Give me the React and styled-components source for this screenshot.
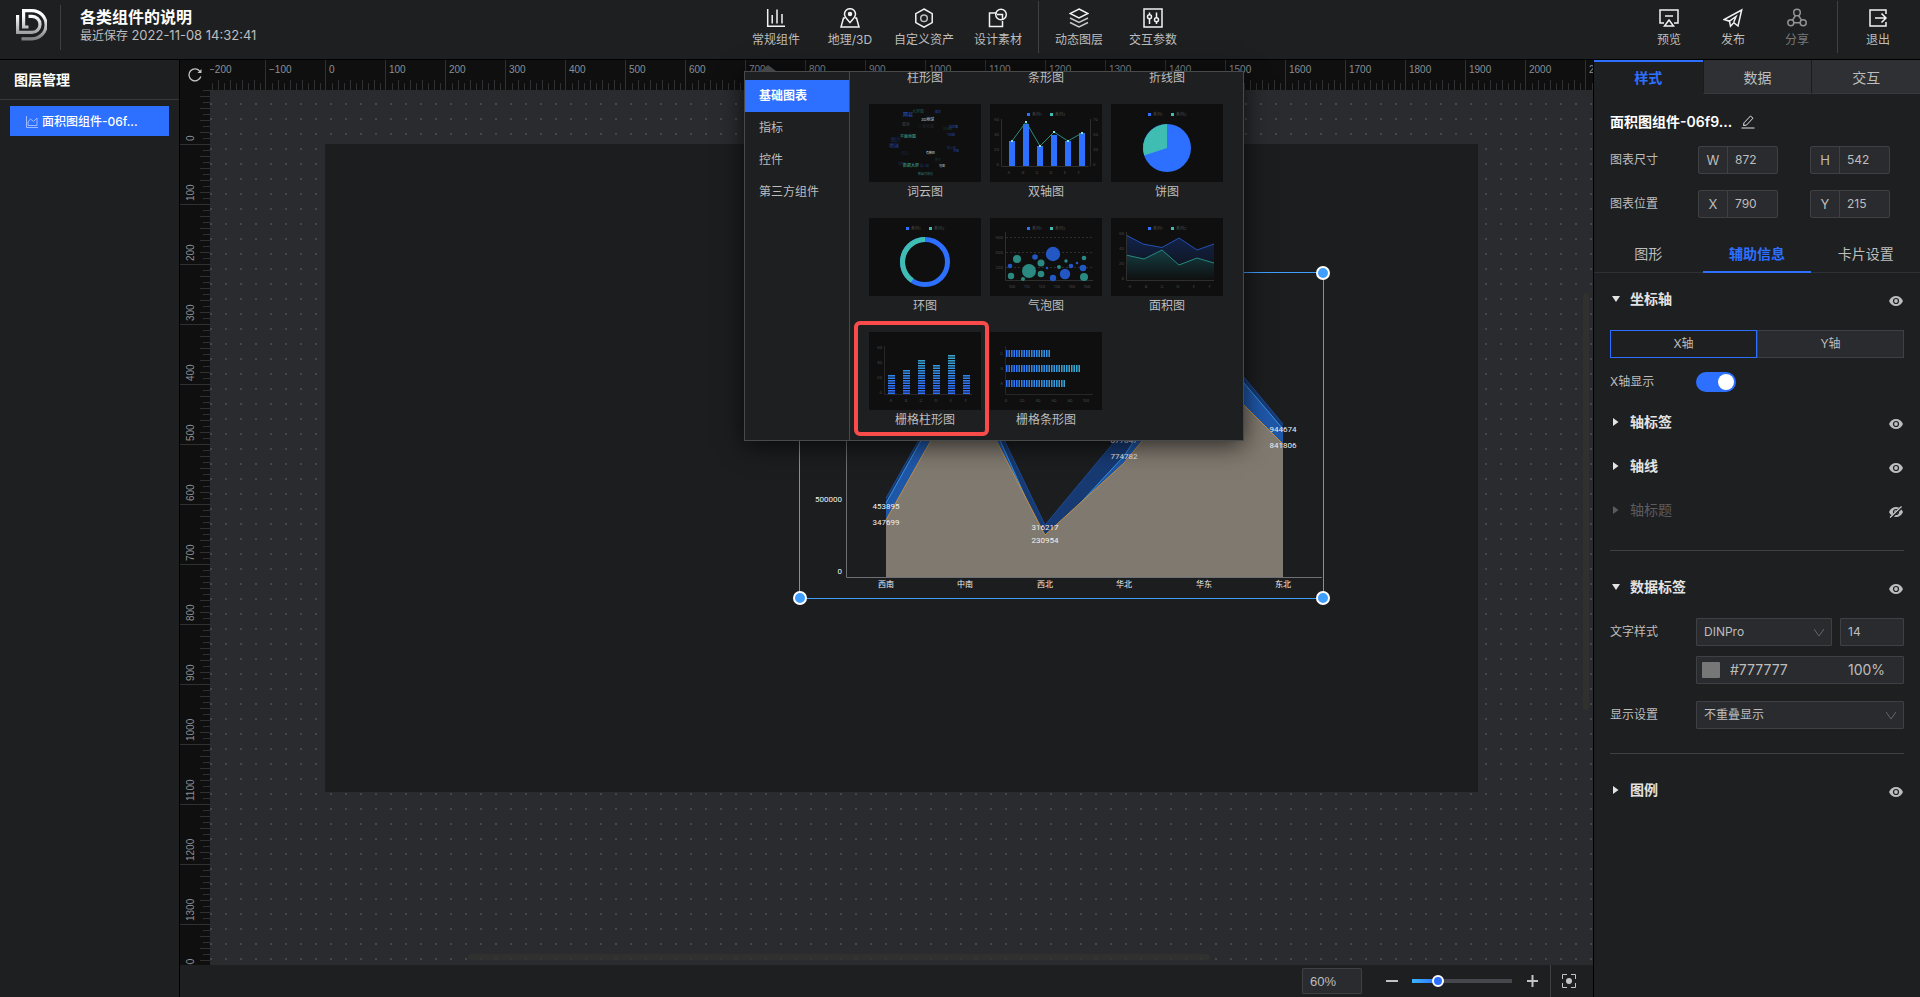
import React, { useState } from 'react';
import styled, { createGlobalStyle, css } from 'styled-components';

const colors = {
    panel: '#1e1f21',
    dark: '#0f0f0f',
    canvas: '#2a2b2f',
    board: '#1c1d1f',
    line: '#3f4043',
    text: '#bdbdbd',
    white: '#ffffff',
    blue: '#2d70ff',
    teal: '#3fbdb2',
    select: '#409eff',
    red: '#f94c4a',
};

const GlobalStyle = createGlobalStyle`
    * { box-sizing: border-box; }
    body {
        margin: 0;
        background: ${colors.panel};
        color: ${colors.text};
        font-family: Inter, "Noto Sans CJK SC", sans-serif;
        font-size: 12px;
        line-height: 20px;
        overflow: hidden;
    }
    button, input, select {
        font: inherit;
        color: inherit;
        border: 0;
        padding: 0;
        margin: 0;
        background: none;
        outline: none;
        border-radius: 0;
    }
    svg { display: block; flex: none; }
    h1, h2, p { margin: 0; }
`;

/* ---------- page ---------- */

const Page = styled.div`
    height: 100vh;
    display: flex;
    flex-direction: column;
`;

const Body = styled.div`
    flex: 1;
    min-height: 0;
    display: flex;
`;

/* ---------- header ---------- */

const Header = styled.header`
    height: 60px;
    padding: 0 5px 0 16px;
    display: flex;
    border-bottom: 1px solid #000;
    background: ${colors.panel};
`;

const Brand = styled.div`
    flex: 1;
    display: flex;
    align-items: flex-start;
    padding-right: 3px;
`;

const BrandLogo = styled.svg`
    margin: 9px 13px 0 0;
`;

const BrandText = styled.div`
    margin-left: 19px;
    padding-top: 7px;
`;

const ProjectName = styled.h1`
    font-size: 16px;
    line-height: 20px;
    font-weight: 600;
    color: ${colors.white};
`;

const Saved = styled.p`
    line-height: 16px;
    time {
        font-size: 13px;
    }
`;

const Split = styled.span`
    flex: none;
    width: 1px;
    height: ${({ $tall }) => ($tall ? 52 : 45)}px;
    margin: ${({ $margin }) => $margin || '1px 3px 0'};
    background: ${colors.line};
`;

const Nav = styled.nav`
    position: relative;
    display: flex;
`;

const Actions = styled.div`
    flex: 1;
    display: flex;
    justify-content: flex-end;
    padding-right: 5px;
`;

const ToolButton = styled.button`
    width: ${({ $width }) => $width || 74}px;
    height: 59px;
    padding: 8px 0 9px;
    display: flex;
    flex-direction: column;
    align-items: center;
    justify-content: space-between;
    opacity: ${({ disabled }) => (disabled ? 0.55 : 1)};
    white-space: nowrap;
    cursor: pointer;
`;

/* ---------- layer panel ---------- */

const LayerPanel = styled.aside`
    flex: none;
    width: 180px;
    border-right: 1px solid #000;
    background: ${colors.panel};
`;

const LayerTitle = styled.h2`
    height: 40px;
    padding-left: 14px;
    font-size: 14px;
    line-height: 40px;
    font-weight: 600;
    color: ${colors.white};
    border-bottom: 1px solid #36373a;
`;

const LayerItem = styled.button`
    width: calc(100% - 20px);
    height: 30px;
    margin: 6px 10px;
    padding: 2px 0 0 16px;
    display: flex;
    align-items: center;
    gap: 4px;
    background: ${colors.blue};
    color: ${colors.white};
    font-weight: 500;
`;

/* ---------- work area ---------- */

const Work = styled.main`
    flex: 1;
    min-width: 0;
    display: grid;
    grid-template-columns: 30px minmax(0, 1fr);
    grid-template-rows: 30px minmax(0, 1fr) 32px;
    background: ${colors.dark};
`;

const Reset = styled.button`
    display: flex;
    align-items: center;
    justify-content: center;
`;

const Ruler = styled.svg`
    width: 100%;
    height: 100%;
    overflow: hidden;
    font-family: "Liberation Sans", sans-serif;
    font-size: 10px;
    fill: #8a8f96;
`;

const Canvas = styled.div`
    position: relative;
    overflow: hidden;
    background: radial-gradient(circle at 1px 14px, #45474b 1px, transparent 1px) 0 0 / 15px 15px ${colors.canvas};
`;

const Board = styled.div`
    position: absolute;
    left: 115px;
    top: 54px;
    width: 1153px;
    height: 648px;
    background: ${colors.board};
`;

const Selection = styled.div`
    position: absolute;
    left: 474px;
    top: 128px;
    width: 525px;
    height: 327px;
    padding: 1px;
    border: 1px solid ${colors.select};
`;

const ChartSvg = styled.svg`
    overflow: visible;
    font-family: Roboto, "Noto Sans CJK SC", sans-serif;
    font-size: 8px;
    fill: #f0f0f0;
`;

const Handle = styled.span`
    position: absolute;
    width: 14px;
    height: 14px;
    border: 2px solid ${colors.white};
    border-radius: 50%;
    background: ${colors.select};
    ${({ $x }) => $x}: -7px;
    ${({ $y }) => $y}: -7px;
`;

const ScrollThumb = styled.span`
    position: absolute;
    border-radius: 3px;
    background: rgba(50, 50, 48, 0.8);
    ${({ $vertical }) => ($vertical
        ? css`right: 4px; top: 203px; width: 6px; height: 417px;`
        : css`left: 258px; bottom: 5px; width: 742px; height: 6px;`)}
`;

const Footer = styled.footer`
    grid-column: 1 / -1;
    display: flex;
    align-items: center;
    justify-content: flex-end;
    padding-right: 17px;
    background: ${colors.panel};
`;

const ZoomInput = styled.input`
    width: 60px;
    height: 26px;
    padding-left: 7px;
    border: 1px solid ${colors.line};
    border-radius: 1px;
    background: ${colors.canvas};
    font-family: "Liberation Sans", sans-serif;
    font-size: 13px;
    margin-right: 24px;
`;

const ZoomSlider = styled.input`
    appearance: none;
    width: 100px;
    height: 12px;
    margin: 0 15px 0 14px;
    background: linear-gradient(90deg, #3db4ff, ${colors.blue} 26px, #46474c 26px) center / 100% 4px no-repeat;
    &::-webkit-slider-thumb {
        appearance: none;
        width: 12px;
        height: 12px;
        border: 2px solid ${colors.white};
        border-radius: 50%;
        background: ${colors.blue};
    }
`;

const FitButton = styled.button`
    height: 32px;
    margin-left: 12px;
    padding-left: 11px;
    border-left: 1px solid ${colors.line};
`;

/* ---------- component popup ---------- */

const Popup = styled.div`
    position: absolute;
    z-index: 10;
    left: 5px;
    top: 71px;
    width: 500px;
    height: 370px;
    display: flex;
    border: 1px solid #48494b;
    background: ${colors.panel};
    box-shadow: 0 4px 24px rgba(0, 0, 0, 0.7);
    &::before {
        content: '';
        position: absolute;
        left: 15px;
        top: -7px;
        border: 8px solid transparent;
        border-top: 0;
        border-bottom: 6px solid #454648;
    }
`;

const Kinds = styled.div`
    flex: none;
    width: 105px;
    padding-top: 8px;
    border-right: 1px solid #48494b;
`;

const Kind = styled.button`
    display: block;
    width: 100%;
    height: 32px;
    padding-left: 14px;
    text-align: left;
    ${({ $active }) => $active && css`
        background: ${colors.blue};
        color: ${colors.white};
        font-weight: 600;
    `}
`;

const Thumbs = styled.div`
    flex: 1;
    display: grid;
    grid-template-columns: repeat(3, 112px);
    align-content: end;
    gap: 16px 9px;
    padding: 0 0 10px 19px;
    overflow: hidden;
`;

const ThumbButton = styled.button`
    position: relative;
    display: block;
    text-align: center;
    line-height: 20px;
    ${({ $marked }) => $marked && css`
        &::after {
            content: '';
            position: absolute;
            inset: -11px -8px -6px -15px;
            border: 4px solid ${colors.red};
            border-radius: 6px;
        }
    `}
`;

const ThumbSvg = styled.svg`
    background: ${colors.dark};
    font-family: Inter, "Noto Sans CJK SC", sans-serif;
    font-size: 4px;
    fill: #4a4a4a;
`;

/* ---------- property panel ---------- */

const Side = styled.aside`
    flex: none;
    width: 327px;
    border-left: 1px solid #000;
    background: ${colors.panel};
`;

const MainTabs = styled.div`
    display: grid;
    grid-template-columns: repeat(3, 1fr);
`;

const MainTab = styled.button`
    height: 34px;
    padding-top: 2px;
    font-size: 14px;
    background: #2f3033;
    border-left: 1px solid #1a1b1d;
    border-bottom: 1px solid #38393c;
    ${({ $active }) => $active && css`
        border: 0;
        padding: 0;
        border-top: 2px solid ${colors.blue};
        background: none;
        color: ${colors.blue};
        font-weight: 600;
    `}
`;

const SubTabs = styled(MainTabs)`
    margin-top: 17px;
    border-bottom: 1px solid #2f3033;
`;

const SubTab = styled.button`
    height: 38px;
    padding-top: 2px;
    font-size: 14px;
    margin-bottom: -1px;
    border-bottom: 2px solid transparent;
    ${({ $active }) => $active && css`
        border-color: ${colors.blue};
        color: ${colors.blue};
        font-weight: 600;
    `}
`;

const Block = styled.div`
    padding: 0 16px;
`;

const NameRow = styled.div`
    display: flex;
    align-items: center;
    gap: 9px;
    padding: 18px 0 14px;
    font-size: 14px;
    font-weight: 600;
    color: ${colors.white};
`;

const Row = styled.div`
    display: flex;
    align-items: center;
    min-height: 28px;
    margin-top: ${({ $top }) => $top || 0}px;
`;

const RowLabel = styled.label`
    flex: none;
    width: ${({ $wide }) => ($wide ? 88 : 86)}px;
`;

const Pair = styled.div`
    flex: 1;
    display: flex;
    gap: 32px;
`;

const Prefixed = styled.label`
    width: 80px;
    height: 28px;
    display: flex;
    border: 1px solid ${colors.line};
    border-radius: 2px;
    background: ${colors.canvas};
`;

const Prefix = styled.span`
    flex: none;
    width: 29px;
    line-height: 26px;
    font-size: 13px;
    text-align: center;
    border-right: 1px solid ${colors.line};
`;

const PlainInput = styled.input`
    flex: 1;
    width: 100%;
    min-width: 0;
    padding-left: 7px;
`;

const SectionHead = styled.div`
    height: 44px;
    margin-top: ${({ $top }) => $top || 0}px;
    display: flex;
    align-items: center;
    justify-content: space-between;
`;

const Fold = styled.button`
    display: flex;
    align-items: center;
    gap: 10px;
    padding-left: 2px;
    font-size: 14px;
    font-weight: ${({ $off }) => ($off ? 400 : 600)};
    color: ${({ $off }) => ($off ? '#5c5c5e' : '#e3e3e3')};
`;

const EyeButton = styled.button`
    padding: 4px 1px 0 0;
`;

const Segments = styled.div`
    display: grid;
    grid-template-columns: 1fr 1fr;
    margin-top: 9px;
`;

const Segment = styled.button`
    height: 28px;
    border: 1px solid ${({ $active }) => ($active ? colors.blue : colors.line)};
    background: ${({ $active }) => ($active ? 'none' : colors.canvas)};
`;

const Switch = styled.input`
    appearance: none;
    width: 40px;
    height: 20px;
    padding: 2px;
    border-radius: 10px;
    background: ${colors.blue};
    display: flex;
    justify-content: flex-end;
    &::before {
        content: '';
        width: 16px;
        height: 16px;
        border-radius: 50%;
        background: ${colors.white};
    }
`;

const Field = styled.span`
    position: relative;
    flex: ${({ $width }) => ($width ? `0 0 ${$width}px` : '1 1 0')};
    min-width: 0;
    height: 28px;
    display: flex;
    align-items: center;
    border: 1px solid ${colors.line};
    border-radius: 1px;
    background: ${colors.canvas};
    & + & {
        margin-left: 8px;
    }
`;

const FieldSelect = styled.select`
    appearance: none;
    width: 100%;
    height: 100%;
    padding-left: 7px;
`;

const Chevron = styled.svg`
    position: absolute;
    right: 7px;
    top: 9px;
    pointer-events: none;
`;

const Swatch = styled.button`
    flex: none;
    width: 18px;
    height: 16px;
    margin: 0 3px 0 5px;
    border-radius: 1px;
    background: #777777;
`;

const ColorInput = styled(PlainInput)`
    font-size: 14px;
`;

const AlphaInput = styled.input`
    flex: none;
    width: 55px;
    font-size: 14px;
`;

const Rule = styled.hr`
    height: 1px;
    margin: ${({ $top }) => $top}px 0 0;
    border: 0;
    background: ${colors.line};
`;

/* ---------- icons ---------- */

const Icon = ({ children, size = 20 }) => (
    <svg width={size} height={size} viewBox="0 0 20 20" fill="none" stroke="#f2f2f2" strokeWidth="1.5" aria-hidden="true">
        {children}
    </svg>
);

const icons = {
    chart: <Icon><path d="M1.7 1v17.3H19M6.2 7v8.5M11 1.5v14M16 6v9.500" /></Icon>,
    map: (
        <Icon>
            <path d="M5 10H3.500L1 19h18l-2.500-9H15" />
            <path d="M10 14.500C7 11 4.500 9 4.500 6.200a5.500 5.500 0 0 1 11 0C15.500 9 13 11 10 14.500z" />
            <circle cx="10" cy="6" r="1.500" fill="#f2f2f2" />
        </Icon>
    ),
    asset: <Icon><path d="M10 1l8.200 4.600v9L10 19.200l-8.200-4.600v-9z" /><circle cx="10" cy="10.200" r="3.300" stroke="#bdbdbd" /></Icon>,
    material: <Icon><path d="M9 5H1.500v13.500h13V13" /><circle cx="13" cy="6.500" r="5.300" /><path d="M9 6.500h5.500V12" /></Icon>,
    layers: (
        <Icon>
            <path d="M10 1l9 4.500-9 4.500-9-4.500z" />
            <path d="M1 10l9 4.500 9-4.500M1 14.500L10 19l9-4.500" stroke="#c8c8c8" />
        </Icon>
    ),
    params: (
        <Icon>
            <path d="M1 1h18v18H1zM6.500 4.500v2M6.500 11v5M13.500 4.500v5M13.500 14v2" />
            <circle cx="6.500" cy="8.700" r="2" />
            <circle cx="13.500" cy="11.700" r="2" />
        </Icon>
    ),
    preview: <Icon><path d="M5 15H1V2h18v13h-4M6 8h8" /><path d="M10 12l4.500 6h-9z" /></Icon>,
    publish: <Icon><path d="M18.700 2L1 11.500l5.500 1.700 1 5 3.300-3.500 4.200 3.300zM6.500 13.200L13 8.500 10.800 14" /></Icon>,
    share: (
        <Icon>
            <circle cx="10" cy="4.500" r="3.300" />
            <circle cx="3.800" cy="14.800" r="3" />
            <circle cx="16.200" cy="14.800" r="3" />
            <path d="M8.500 7.500L5.500 12.200M11.500 7.500l3 4.700M7 14.800h6" />
        </Icon>
    ),
    exit: <Icon><path d="M18 6V2H2v16h16v-4M7 10h11M13.500 5.500L18 10l-4.500 4.500" /></Icon>,
};

const Logo = () => (
    <BrandLogo width="31" height="32" viewBox="0 0 31 32" fill="none" strokeWidth="3.200" role="img" aria-label="logo">
        <defs>
            <linearGradient id="logo" gradientUnits="userSpaceOnUse" x1="0" y1="0" x2="0" y2="32">
                <stop offset="0.2" stopColor="#ffffff" />
                <stop offset="1" stopColor="#77787a" />
            </linearGradient>
        </defs>
        <g stroke="url(#logo)">
            <path d="M1.600 6v17.400h14.400a8 8 0 0 0 0-16H12.500" />
            <path d="M12.500 18H7.600V1.600H16a14 14 0 0 1 0 28.200H5.500" />
        </g>
    </BrandLogo>
);

const Eye = ({ off }) => (
    <svg width="14" height="12" viewBox="0 0 14 12" aria-hidden="true">
        <path d="M0 6C1.500 2.700 4 1 7 1s5.500 1.700 7 5c-1.500 3.300-4 5-7 5S1.500 9.300 0 6z" fill="#bdbdbd" />
        <circle cx="7" cy="6" r="2.500" fill="#bdbdbd" stroke={colors.panel} strokeWidth="1.200" />
        {off && <path d="M1.500 12L13 1" stroke={colors.panel} strokeWidth="3" />}
        {off && <path d="M1 11.500L12.500 .5" stroke="#d0d0d0" strokeWidth="1.200" />}
    </svg>
);

const Caret = ({ open }) => (
    <svg width="8" height="8" viewBox="0 0 8 8" fill="currentColor" aria-hidden="true">
        <path d={open ? 'M0 1h8L4 7z' : 'M1 0v8l5.500-4z'} />
    </svg>
);

const SelectArrow = () => (
    <Chevron width="10" height="9" viewBox="0 0 10 9" fill="none" stroke="#66676a" aria-hidden="true">
        <path d="M0 1l5 7 5-7" />
    </Chevron>
);

/* ---------- rulers ---------- */

const STEP = 60;

const range = (from, to) => Array.from({ length: to - from + 1 }, (_, i) => from + i);

const label = (n) => (n < 0 ? `\u2212${-n * 100}` : String(n * 100));

const TopRuler = () => (
    <Ruler aria-hidden="true">
        {range(-2, 21).map((n) => {
            const x = 116 + n * STEP;
            return (
                <g key={n}>
                    <rect x={x - 1} width="1" height="30" fill="#303032" />
                    {range(1, 9).map((k) => (
                        <rect key={k} x={x + k * 6} y={k % 2 ? 23 : 20} width="1" height="10" fill="#303032" />
                    ))}
                    <text x={x + 3} y="13">{label(n)}</text>
                </g>
            );
        })}
    </Ruler>
);

const LeftRuler = () => (
    <Ruler aria-hidden="true">
        {range(-1, 14).map((n) => {
            const y = 54 + n * STEP;
            return (
                <g key={n}>
                    <rect y={y} width="30" height="1" fill="#303032" />
                    {range(1, 9).map((k) => (
                        <rect key={k} x={k % 2 ? 23 : 20} y={y + k * 6} width="10" height="1" fill="#303032" />
                    ))}
                    {n >= 0 && <text transform={`translate(14 ${y - 3}) rotate(-90)`}>{label(n)}</text>}
                </g>
            );
        })}
    </Ruler>
);

/* ---------- chart on the board ---------- */

const regions = ['西南', '中南', '西北', '华北', '华东', '东北'];
const xs = [85, 164, 244, 323, 403, 482];
const series = [
    { tops: [224, 84, 251, 156, 55, 150], fill: '#173a73', stroke: '#1d4a94' },
    { tops: [229, 88, 267, 182, 62, 155], fill: '#1f57a8', stroke: '#3a93e0' },
    { tops: [246, 106, 261, 189, 91, 170], fill: '#80796f', stroke: '#c08f45' },
];
const values = [
    [0, 235, '453895'], [0, 251, '347699'], [2, 256, '316217'], [2, 269, '230954'],
    [3, 169, '877847'], [3, 185, '774782'], [5, 158, '944674'], [5, 174, '841806'],
];

const AreaChart = () => (
    <ChartSvg width="521" height="323" viewBox="0 0 521 323" role="img" aria-label="面积图">
        {series.map(({ tops, fill, stroke }) => {
            const points = xs.map((x, i) => `${x},${tops[i]}`).join(' ');
            return (
                <g key={fill}>
                    <polygon points={`85,303 ${points} 482,303`} fill={fill} />
                    <polyline points={points} fill="none" stroke={stroke} />
                </g>
            );
        })}
        <path d="M45.500 40V303.500H521" fill="none" stroke="#6e7073" />
        <text x="41" y="228" textAnchor="end">500000</text>
        <text x="41" y="300" textAnchor="end">0</text>
        {values.map(([i, y, text]) => (
            <text key={text} x={xs[i]} y={y} textAnchor="middle">{text}</text>
        ))}
        {regions.map((text, i) => (
            <text key={text} x={xs[i]} y="313" textAnchor="middle">{text}</text>
        ))}
    </ChartSvg>
);

/* ---------- thumbnails ---------- */

const letters = ['A', 'B', 'C', 'D', 'E', 'F'];

const Legend = () => (
    <g>
        <rect x="37" y="9" width="3" height="3" fill={colors.blue} />
        <text x="42" y="12">系列1</text>
        <rect x="60" y="9" width="3" height="3" fill={colors.teal} />
        <text x="65" y="12">系列2</text>
    </g>
);

const Scale = ({ x, y, items, step = 15, anchor = 'end' }) => items.map((item, i) => (
    <text key={item} x={x} y={y + i * step} textAnchor={anchor}>{item}</text>
));

const Ticks = ({ x, y = 70, items, step }) => items.map((item, i) => (
    <text key={item} x={x + i * step} y={y} textAnchor="middle">{item}</text>
));

const words = [
    [34, 12, 5, '#2c5cd0', '网易'], [43, 9, 4, '#1d4f4b', '大屏图'], [52, 17, 4, '#c4d2dc', '3D地球'], [66, 9, 3, '#22418f', '图表'],
    [33, 22, 4, '#3b3f45', '图表'], [49, 24, 4, '#222429', '三维地图'], [80, 24, 3, '#2a50b0', '柱状图'], [74, 26, 3, '#173c3a', '折线图'],
    [31, 34, 4, '#3fa99c', '平面地图'], [22, 37, 5, '#1d3061', '图片'], [77, 32, 3, '#22418f', '飞线图'], [20, 43, 5, '#24469d', '地球'],
    [57, 50, 3, '#d5d5d5', '有数BI'], [78, 45, 3, '#1d3061', '散点图'], [84, 48, 3, '#22418f', '饼图'], [32, 51, 4, '#1b2947', '词云'],
    [29, 61, 3, '#1d3061', '可视'], [34, 63, 4, '#3fa99c', '数据大屏'], [51, 63, 3, '#1d3061', '漏斗图'], [70, 63, 3, '#b0b0b0', '地图'],
    [49, 71, 3, '#2d766f', '数据可视化'], [66, 57, 3, '#173c3a', '热力'],
];

const WordThumb = () => words.map(([x, y, size, fill, text]) => (
    <text key={`${x}-${y}`} x={x} y={y} fontSize={size} fill={fill}>{text}</text>
));

const dualTops = [37, 20, 42, 31, 37, 29];
const dualDots = [37, 18, 42, 28, 37, 29];

const DualThumb = () => (
    <>
        <Legend />
        <path d="M11.500 15v47.500h87M100.500 15v47.500" fill="none" stroke="#2e2e2e" />
        <Scale x={9} y={17} items={['60', '40', '20', '0']} />
        <Scale x={103} y={17} items={['70', '50', '30', '0']} anchor="start" />
        {dualTops.map((y, i) => <rect key={i} x={19 + i * 14} y={y} width="6" height={62 - y} fill={colors.blue} />)}
        <polyline points={dualDots.map((y, i) => `${22 + i * 14},${y}`).join(' ')} fill="none" stroke="#2a8c80" />
        {dualDots.map((y, i) => <rect key={i} x={21 + i * 14} y={y - 1} width="2" height="2" fill="#8be3d8" />)}
        <Ticks x={19} items={letters} step={14} />
    </>
);

const PieThumb = () => (
    <>
        <Legend />
        <circle cx="56" cy="44" r="24" fill={colors.blue} />
        <path d="M56 44V20A24 24 0 0 0 33.200 51.500z" fill={colors.teal} />
    </>
);

const RingThumb = () => (
    <>
        <Legend />
        <g fill="none" strokeWidth="5">
            <circle cx="56" cy="44" r="22.500" stroke={colors.blue} />
            <path d="M56 21.500A22.500 22.500 0 0 0 43.200 62.500" stroke={colors.teal} />
        </g>
    </>
);

const bubbles = {
    '#2a8a82': [[27, 41, 4], [39, 53, 7], [51, 45, 3.5], [51, 56, 3.3], [21, 58, 3.2], [33, 61, 2], [69, 49, 2], [76, 43, 1.7], [94, 40, 2.3], [94, 59, 4]],
    '#2257c4': [[63, 36, 7.2], [45, 39, 2.8], [20, 48, 2.3], [57, 50, 1.3], [63, 60, 3.2], [75, 56, 5.2], [81, 48, 2.3], [87, 45, 1.3], [93, 50, 3.3]],
};

const BubbleThumb = () => (
    <>
        <Legend />
        <path d="M15.500 14v48.500H103" fill="none" stroke="#2e2e2e" />
        <path d="M16 19.500h87M16 34.500h87M16 49.500h87" stroke="#2e2e2e" strokeDasharray="2 2" />
        <Scale x={13} y={21} items={['600', '400', '200']} />
        {Object.entries(bubbles).map(([fill, list]) => list.map(([x, y, r]) => (
            <circle key={`${x}-${y}`} cx={x} cy={y} r={r} fill={fill} />
        )))}
        <Ticks x={22} items={['100', '110', '120', '130', '140', '150']} step={15} />
    </>
);

const AreaThumb = () => (
    <>
        <defs>
            <linearGradient id="areaBlue" x1="0" y1="0" x2="0" y2="1">
                <stop stopColor="#12244c" />
                <stop offset="1" stopColor={colors.dark} />
            </linearGradient>
            <linearGradient id="areaTeal" x1="0" y1="0" x2="0" y2="1">
                <stop stopColor="#143f44" />
                <stop offset="1" stopColor={colors.dark} />
            </linearGradient>
        </defs>
        <Legend />
        <path d="M15 62V17l17 9 19 3.500L68 20l18 12 17-6v36z" fill="url(#areaBlue)" />
        <path d="M15 62V37l18 4 18-9 17 15 18-7 17 5v17z" fill="url(#areaTeal)" />
        <path d="M15 17l17 9 19 3.500L68 20l18 12 17-6" fill="none" stroke="#2450b5" />
        <path d="M15 37l18 4 18-9 17 15 18-7 17 5" fill="none" stroke="#25897f" />
        <path d="M15.500 14v48.500H103" fill="none" stroke="#2e2e2e" />
        <Scale x={13} y={17} items={['60', '40', '20', '0']} />
        <Ticks x={19} items={letters} step={16} />
    </>
);

const GridBarThumb = () => (
    <>
        <defs>
            <linearGradient id="barTone" gradientUnits="userSpaceOnUse" x1="0" y1="62" x2="0" y2="27">
                <stop offset="0.2" stopColor="#2d70ff" />
                <stop offset="1" stopColor="#37a5cf" />
            </linearGradient>
        </defs>
        <path d="M15.500 14v48.500H103" fill="none" stroke="#272727" />
        <Scale x={13} y={17} items={['60', '40', '20', '0']} />
        {[43, 38, 28, 33, 23, 43].map((top, i) => range(0, (63 - top) / 5 - 1).map((k) => (
            <g key={`${i}-${k}`} fill="url(#barTone)">
                <rect x={19 + i * 15} y={top + k * 5} width="7" height="4" opacity="0.55" />
                <rect x={19 + i * 15} y={top + k * 5} width="7" height="1" />
                <rect x={19 + i * 15} y={top + k * 5 + 3} width="7" height="1" />
            </g>
        )))}
        <Ticks x={22} items={letters} step={15} />
    </>
);

const GridStripThumb = () => (
    <>
        <defs>
            <linearGradient id="stripTone" gradientUnits="userSpaceOnUse" x1="16" y1="0" x2="80" y2="0">
                <stop stopColor="#2d70ff" />
                <stop offset="1" stopColor="#37a5cf" />
            </linearGradient>
        </defs>
        <path d="M15.500 14v48.500H103" fill="none" stroke="#272727" />
        <Scale x={13} y={23} items={['C', 'B', 'A']} />
        {[[18, 9], [33, 15], [48, 12]].map(([y, count]) => range(0, count - 1).map((k) => (
            <g key={`${y}-${k}`} fill="url(#stripTone)">
                <rect x={16 + k * 5} y={y} width="4" height="7" opacity="0.55" />
                <rect x={16 + k * 5} y={y} width="1" height="7" />
                <rect x={19 + k * 5} y={y} width="1" height="7" />
            </g>
        )))}
        <Ticks x={16} items={['0', '20', '40', '60', '80', '100']} step={16} />
    </>
);

const thumbs = [
    { name: '柱形图' },
    { name: '条形图' },
    { name: '折线图' },
    { name: '词云图', Draw: WordThumb },
    { name: '双轴图', Draw: DualThumb },
    { name: '饼图', Draw: PieThumb },
    { name: '环图', Draw: RingThumb },
    { name: '气泡图', Draw: BubbleThumb },
    { name: '面积图', Draw: AreaThumb },
    { name: '栅格柱形图', Draw: GridBarThumb, marked: true },
    { name: '栅格条形图', Draw: GridStripThumb },
];

const kinds = ['基础图表', '指标', '控件', '第三方组件'];

const ComponentPopup = () => {
    const [kind, setKind] = useState(kinds[0]);
    return (
        <Popup>
            <Kinds>
                {kinds.map((name) => (
                    <Kind key={name} $active={name === kind} onClick={() => setKind(name)}>{name}</Kind>
                ))}
            </Kinds>
            <Thumbs>
                {thumbs.map(({ name, Draw, marked }) => (
                    <ThumbButton key={name} $marked={marked}>
                        {Draw && <ThumbSvg width="112" height="78" viewBox="0 0 112 78" aria-hidden="true"><Draw /></ThumbSvg>}
                        {name}
                    </ThumbButton>
                ))}
            </Thumbs>
        </Popup>
    );
};

const Tool = ({ icon, name, ...rest }) => (
    <ToolButton {...rest}>
        {icons[icon]}
        {name}
    </ToolButton>
);

const TopBar = () => (
    <Header>
        <Brand>
            <Logo />
            <Split $margin="5px 0 0" />
            <BrandText>
                <ProjectName>各类组件的说明</ProjectName>
                <Saved>最近保存 <time>2022-11-08 14:32:41</time></Saved>
            </BrandText>
        </Brand>
        <Nav>
            <Tool icon="chart" name="常规组件" />
            <Tool icon="map" name="地理/3D" />
            <Tool icon="asset" name="自定义资产" />
            <Tool icon="material" name="设计素材" />
            <Split $tall />
            <Tool icon="layers" name="动态图层" />
            <Tool icon="params" name="交互参数" />
            <ComponentPopup />
        </Nav>
        <Actions>
            <Tool icon="preview" name="预览" $width={64} />
            <Tool icon="publish" name="发布" $width={64} />
            <Tool icon="share" name="分享" $width={64} disabled />
            <Split $tall $margin="1px 8px 0" />
            <Tool icon="exit" name="退出" $width={64} />
        </Actions>
    </Header>
);

const Workspace = () => (
    <Work>
        <Reset aria-label="重置">
            <svg width="14" height="14" viewBox="0 0 14 14" fill="none" stroke="#c4c4c4" strokeWidth="1.300">
                <path d="M12.800 8.500A6 6 0 1 1 12 3.500" />
                <path d="M13.500 1v4H9.500z" fill="#c4c4c4" stroke="none" />
            </svg>
        </Reset>
        <TopRuler />
        <LeftRuler />
        <Canvas>
            <Board>
                <Selection>
                    <AreaChart />
                    <Handle $x="left" $y="top" />
                    <Handle $x="right" $y="top" />
                    <Handle $x="left" $y="bottom" />
                    <Handle $x="right" $y="bottom" />
                </Selection>
            </Board>
            <ScrollThumb $vertical />
            <ScrollThumb />
        </Canvas>
        <Footer>
            <ZoomInput defaultValue="60%" aria-label="缩放比例" />
            <button aria-label="缩小">
                <svg width="12" height="12" viewBox="0 0 12 12" stroke="#c4c4c4" strokeWidth="2"><path d="M0 6h12" /></svg>
            </button>
            <ZoomSlider type="range" min="0" max="88" defaultValue="20" aria-label="缩放" />
            <button aria-label="放大">
                <svg width="11" height="12" viewBox="0 0 11 12" stroke="#c4c4c4" strokeWidth="2"><path d="M0 6h11M5.500 0v12" /></svg>
            </button>
            <FitButton aria-label="适应画布">
                <svg width="14" height="14" viewBox="0 0 14 14" fill="none" stroke="#c4c4c4">
                    <path d="M.5 5V.5H5M9 .5h4.500V5M13.500 9v4.500H9M5 13.500H.5V9" />
                    <circle cx="7" cy="7" r="3" fill="#c4c4c4" stroke="none" />
                </svg>
            </FitButton>
        </Footer>
    </Work>
);

const SizeRow = ({ title, fields, top }) => (
    <Row $top={top}>
        <RowLabel as="span" $wide>{title}</RowLabel>
        <Pair>
            {fields.map(([name, value]) => (
                <Prefixed key={name}>
                    <Prefix>{name}</Prefix>
                    <PlainInput defaultValue={value} />
                </Prefixed>
            ))}
        </Pair>
    </Row>
);

const Section = ({ title, open, off, top }) => (
    <SectionHead $top={top}>
        <Fold $off={off} aria-expanded={!!open}>
            <Caret open={open} />
            {title}
        </Fold>
        <EyeButton aria-label={`${title}显隐`}><Eye off={off} /></EyeButton>
    </SectionHead>
);

const Properties = () => (
    <Side>
        <MainTabs>
            <MainTab $active>样式</MainTab>
            <MainTab>数据</MainTab>
            <MainTab>交互</MainTab>
        </MainTabs>
        <Block>
            <NameRow>
                面积图组件-06f9...
                <svg width="14" height="14" viewBox="0 0 14 14" fill="none" stroke="#e3e3e3" aria-hidden="true">
                    <path d="M2.500 10.500L3 7.800 9.500 1l2.500 2.200-6.500 6.900zM.5 13h13" />
                </svg>
            </NameRow>
            <SizeRow title="图表尺寸" fields={[['W', '872'], ['H', '542']]} />
            <SizeRow title="图表位置" fields={[['X', '790'], ['Y', '215']]} top={16} />
        </Block>
        <SubTabs>
            <SubTab>图形</SubTab>
            <SubTab $active>辅助信息</SubTab>
            <SubTab>卡片设置</SubTab>
        </SubTabs>
        <Block>
            <Section title="坐标轴" open top={4} />
            <Segments>
                <Segment $active>X轴</Segment>
                <Segment>Y轴</Segment>
            </Segments>
            <Row $top={10}>
                <RowLabel htmlFor="axis-show">X轴显示</RowLabel>
                <Switch id="axis-show" type="checkbox" defaultChecked />
            </Row>
            <Section title="轴标签" top={4} />
            <Section title="轴线" />
            <Section title="轴标题" off />
            <Rule $top={18} />
            <Section title="数据标签" open top={14} />
            <Row $top={9}>
                <RowLabel htmlFor="font-family">文字样式</RowLabel>
                <Field>
                    <FieldSelect id="font-family"><option>DINPro</option></FieldSelect>
                    <SelectArrow />
                </Field>
                <Field $width={64}>
                    <PlainInput defaultValue="14" aria-label="字号" />
                </Field>
            </Row>
            <Row $top={10}>
                <RowLabel as="span" />
                <Field>
                    <Swatch aria-label="颜色" />
                    <ColorInput defaultValue="#777777" aria-label="色值" />
                    <AlphaInput defaultValue="100%" aria-label="透明度" />
                </Field>
            </Row>
            <Row $top={17}>
                <RowLabel htmlFor="overlap">显示设置</RowLabel>
                <Field>
                    <FieldSelect id="overlap"><option>不重叠显示</option></FieldSelect>
                    <SelectArrow />
                </Field>
            </Row>
            <Rule $top={24} />
            <Section title="图例" top={14} />
        </Block>
    </Side>
);

const App = () => (
    <Page>
        <GlobalStyle />
        <TopBar />
        <Body>
            <LayerPanel>
                <LayerTitle>图层管理</LayerTitle>
                <LayerItem>
                    <svg width="12" height="12" viewBox="0 0 12 12" fill="none" stroke="#9dbcff" aria-hidden="true">
                        <path d="M.5 0v11.500H12M2 9.500V6l2.500-3 3 2.500L11 2v7.500z" />
                    </svg>
                    面积图组件-06f...
                </LayerItem>
            </LayerPanel>
            <Workspace />
            <Properties />
        </Body>
    </Page>
);

export default App;
